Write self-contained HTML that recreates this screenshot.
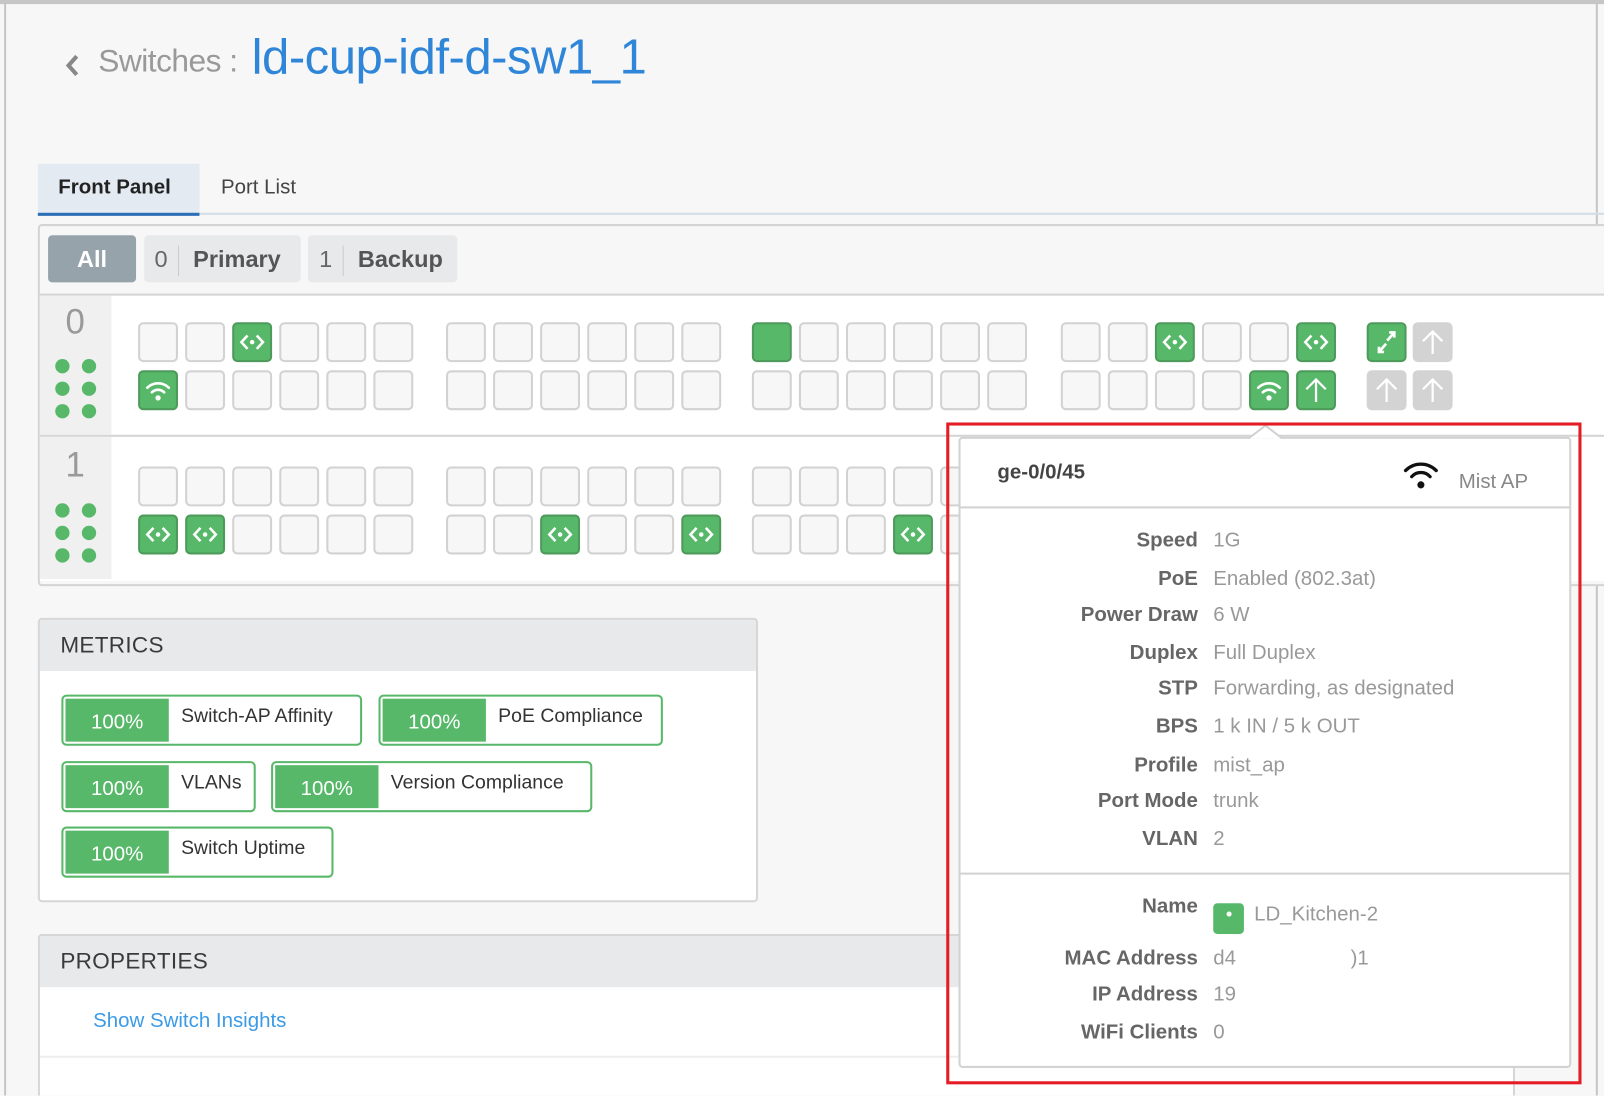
<!DOCTYPE html>
<html><head><meta charset="utf-8">
<style>
html,body{margin:0;padding:0;width:1604px;height:1096px;overflow:hidden;background:#f7f7f7;font-family:"Liberation Sans",sans-serif;}
#c{position:absolute;left:0;top:0;width:1568px;height:1071px;transform:scale(1.02296);transform-origin:0 0;background:#f7f7f7;overflow:hidden}
.a{position:absolute}
.g{position:absolute;display:flex;gap:7px}
.p{width:35px;height:35px;border:2px solid #d2d2d2;border-radius:5px;background:#f7f7f7;box-sizing:content-box}
.p.on{background:#57b86a;border-color:#4d9a5b}
.p.gr{background:#d3d3d3;border-color:#d3d3d3}
.p svg{display:block}
.dots{position:absolute;left:54px;width:42px;display:grid;grid-template-columns:14px 14px;column-gap:12px;row-gap:8px}
.dots i{width:14px;height:14px;border-radius:50%;background:#57b86a;display:block}
.card{position:absolute;background:#fff;border:2px solid #d6d6d6;border-radius:4px}
.ch{background:#e8e9eb;height:50px;font-size:22px;color:#3a3a3a;line-height:50px;padding-left:20px;letter-spacing:0.3px}
.m{position:absolute;height:46px;border:2px solid #57b86a;border-radius:5px;display:flex;align-items:center;background:#fff}
.m b{display:block;background:#57b86a;color:#fff;font-weight:normal;font-size:20px;height:42px;line-height:46px;margin-left:2px;width:101px;text-align:center}
.m span{font-size:19px;color:#333;padding-left:12px;margin-top:-6px}
.row{position:absolute;left:0;width:232px;text-align:right;font-size:20px;font-weight:bold;color:#666}
.val{position:absolute;left:247px;font-size:20px;color:#999;white-space:nowrap}
</style></head><body>
<div id="c">
<div class="a" style="left:0;top:0;width:1568px;height:4px;background:#c6c6c6"></div>
<div class="a" style="left:4px;top:0;width:2px;height:1071px;background:#c6c6c6"></div>
<div class="a" style="left:1560px;top:0;width:2px;height:1071px;background:#c6c6c6"></div>

<svg class="a" style="left:60px;top:50px" width="22" height="28" viewBox="0 0 22 28"><path d="M15 5 L7 14 L15 23" stroke="#888" stroke-width="4" fill="none"/></svg>
<div class="a" style="left:96px;top:42px;font-size:31px;color:#999;letter-spacing:-0.5px">Switches :</div>
<div class="a" style="left:246px;top:29px;font-size:48px;color:#2f86d8;letter-spacing:-0.5px">ld-cup-idf-d-sw1_1</div>

<div class="a" style="left:37px;top:160px;width:158px;height:48px;background:#e3eaf2;border-bottom:3px solid #2d6fb5"></div>
<div class="a" style="left:57px;top:172px;font-size:20px;color:#222;font-weight:bold">Front Panel</div>
<div class="a" style="left:216px;top:172px;font-size:20px;color:#444;">Port List</div>
<div class="a" style="left:195px;top:208px;width:1373px;height:2px;background:#d3dde6"></div>

<div class="a" style="left:37px;top:219px;width:1540px;height:350px;border:2px solid #d4d4d4;border-radius:4px;background:#f7f7f7"></div>
<div class="a" style="left:47px;top:230px;width:86px;height:46px;background:#97a3ab;border-radius:4px;color:#fff;font-size:23px;font-weight:bold;line-height:46px;text-align:center">All</div>
<div class="a" style="left:141px;top:230px;width:153px;height:46px;background:#e8e9eb;border-radius:4px;font-size:23px;color:#666;line-height:46px"><span style="padding-left:10px">0</span><span style="display:inline-block;width:1px;height:30px;background:#ccc;vertical-align:middle;margin:0 14px 0 10px"></span><b style="color:#555">Primary</b></div>
<div class="a" style="left:301px;top:230px;width:146px;height:46px;background:#e8e9eb;border-radius:4px;font-size:23px;color:#666;line-height:46px"><span style="padding-left:11px">1</span><span style="display:inline-block;width:1px;height:30px;background:#ccc;vertical-align:middle;margin:0 14px 0 10px"></span><b style="color:#555">Backup</b></div>

<div class="a" style="left:39px;top:287px;width:1538px;height:138px;background:#fff;border-top:2px solid #d4d4d4"></div>
<div class="a" style="left:39px;top:425px;width:1538px;height:141px;background:#fff;border-top:2px solid #d4d4d4"></div>
<div class="a" style="left:39px;top:289px;width:70px;height:136px;background:#f0f0f0"></div>
<div class="a" style="left:39px;top:427px;width:70px;height:139px;background:#f0f0f0"></div>
<div class="a" style="left:64px;top:296px;font-size:34px;color:#999">0</div>
<div class="a" style="left:64px;top:436px;font-size:34px;color:#999">1</div>
<div class="dots" style="top:351px"><i></i><i></i><i></i><i></i><i></i><i></i></div>
<div class="dots" style="top:492px"><i></i><i></i><i></i><i></i><i></i><i></i></div>

<div class="g" style="left:135px;top:315px"><div class="p"></div><div class="p"></div><div class="p on"><svg width="35" height="35" viewBox="0 0 35 35"><path d="M13 11 L7 17.5 L13 24 M22 11 L28 17.5 L22 24" stroke="#fff" stroke-width="2.5" fill="none"/><circle cx="17.5" cy="17.5" r="2.2" fill="#fff"/></svg></div><div class="p"></div><div class="p"></div><div class="p"></div></div>
<div class="g" style="left:135px;top:362px"><div class="p on"><svg width="35" height="35" viewBox="0 0 35 35"><path d="M7 15 A15 15 0 0 1 28 15 M11.5 19.5 A8.5 8.5 0 0 1 23.5 19.5" stroke="#fff" stroke-width="2.6" fill="none" stroke-linecap="round"/><circle cx="17.5" cy="25" r="2.6" fill="#fff"/></svg></div><div class="p"></div><div class="p"></div><div class="p"></div><div class="p"></div><div class="p"></div></div>
<div class="g" style="left:436px;top:315px"><div class="p"></div><div class="p"></div><div class="p"></div><div class="p"></div><div class="p"></div><div class="p"></div></div>
<div class="g" style="left:436px;top:362px"><div class="p"></div><div class="p"></div><div class="p"></div><div class="p"></div><div class="p"></div><div class="p"></div></div>
<div class="g" style="left:735px;top:315px"><div class="p on"></div><div class="p"></div><div class="p"></div><div class="p"></div><div class="p"></div><div class="p"></div></div>
<div class="g" style="left:735px;top:362px"><div class="p"></div><div class="p"></div><div class="p"></div><div class="p"></div><div class="p"></div><div class="p"></div></div>
<div class="g" style="left:1037px;top:315px"><div class="p"></div><div class="p"></div><div class="p on"><svg width="35" height="35" viewBox="0 0 35 35"><path d="M13 11 L7 17.5 L13 24 M22 11 L28 17.5 L22 24" stroke="#fff" stroke-width="2.5" fill="none"/><circle cx="17.5" cy="17.5" r="2.2" fill="#fff"/></svg></div><div class="p"></div><div class="p"></div><div class="p on"><svg width="35" height="35" viewBox="0 0 35 35"><path d="M13 11 L7 17.5 L13 24 M22 11 L28 17.5 L22 24" stroke="#fff" stroke-width="2.5" fill="none"/><circle cx="17.5" cy="17.5" r="2.2" fill="#fff"/></svg></div></div>
<div class="g" style="left:1037px;top:362px"><div class="p"></div><div class="p"></div><div class="p"></div><div class="p"></div><div class="p on"><svg width="35" height="35" viewBox="0 0 35 35"><path d="M7 15 A15 15 0 0 1 28 15 M11.5 19.5 A8.5 8.5 0 0 1 23.5 19.5" stroke="#fff" stroke-width="2.6" fill="none" stroke-linecap="round"/><circle cx="17.5" cy="25" r="2.6" fill="#fff"/></svg></div><div class="p on"><svg width="35" height="35" viewBox="0 0 35 35"><path d="M17.5 29 V7 M8 16.5 L17.5 7 L27 16.5" stroke="#fff" stroke-width="2.2" fill="none"/></svg></div></div>
<div class="g" style="left:1336px;top:315px;gap:6px"><div class="p on"><svg width="35" height="35" viewBox="0 0 35 35"><path d="M18 16 L25 8 M20 8 H25 V13 M17 19 L10 27 M10 22 V27 H15" stroke="#fff" stroke-width="2.6" fill="none"/></svg></div><div class="p gr"><svg width="35" height="35" viewBox="0 0 35 35"><path d="M17.5 29 V7 M8 16.5 L17.5 7 L27 16.5" stroke="#fff" stroke-width="2.2" fill="none"/></svg></div></div>
<div class="g" style="left:1336px;top:362px;gap:6px"><div class="p gr"><svg width="35" height="35" viewBox="0 0 35 35"><path d="M17.5 29 V7 M8 16.5 L17.5 7 L27 16.5" stroke="#fff" stroke-width="2.2" fill="none"/></svg></div><div class="p gr"><svg width="35" height="35" viewBox="0 0 35 35"><path d="M17.5 29 V7 M8 16.5 L17.5 7 L27 16.5" stroke="#fff" stroke-width="2.2" fill="none"/></svg></div></div>

<div class="g" style="left:135px;top:456px"><div class="p"></div><div class="p"></div><div class="p"></div><div class="p"></div><div class="p"></div><div class="p"></div></div>
<div class="g" style="left:135px;top:503px"><div class="p on"><svg width="35" height="35" viewBox="0 0 35 35"><path d="M13 11 L7 17.5 L13 24 M22 11 L28 17.5 L22 24" stroke="#fff" stroke-width="2.5" fill="none"/><circle cx="17.5" cy="17.5" r="2.2" fill="#fff"/></svg></div><div class="p on"><svg width="35" height="35" viewBox="0 0 35 35"><path d="M13 11 L7 17.5 L13 24 M22 11 L28 17.5 L22 24" stroke="#fff" stroke-width="2.5" fill="none"/><circle cx="17.5" cy="17.5" r="2.2" fill="#fff"/></svg></div><div class="p"></div><div class="p"></div><div class="p"></div><div class="p"></div></div>
<div class="g" style="left:436px;top:456px"><div class="p"></div><div class="p"></div><div class="p"></div><div class="p"></div><div class="p"></div><div class="p"></div></div>
<div class="g" style="left:436px;top:503px"><div class="p"></div><div class="p"></div><div class="p on"><svg width="35" height="35" viewBox="0 0 35 35"><path d="M13 11 L7 17.5 L13 24 M22 11 L28 17.5 L22 24" stroke="#fff" stroke-width="2.5" fill="none"/><circle cx="17.5" cy="17.5" r="2.2" fill="#fff"/></svg></div><div class="p"></div><div class="p"></div><div class="p on"><svg width="35" height="35" viewBox="0 0 35 35"><path d="M13 11 L7 17.5 L13 24 M22 11 L28 17.5 L22 24" stroke="#fff" stroke-width="2.5" fill="none"/><circle cx="17.5" cy="17.5" r="2.2" fill="#fff"/></svg></div></div>
<div class="g" style="left:735px;top:456px"><div class="p"></div><div class="p"></div><div class="p"></div><div class="p"></div><div class="p"></div><div class="p"></div></div>
<div class="g" style="left:735px;top:503px"><div class="p"></div><div class="p"></div><div class="p"></div><div class="p on"><svg width="35" height="35" viewBox="0 0 35 35"><path d="M13 11 L7 17.5 L13 24 M22 11 L28 17.5 L22 24" stroke="#fff" stroke-width="2.5" fill="none"/><circle cx="17.5" cy="17.5" r="2.2" fill="#fff"/></svg></div><div class="p"></div><div class="p"></div></div>

<div class="card" style="left:37px;top:604px;width:700px;height:274px;overflow:hidden">
<div class="ch">METRICS</div>
</div>
<div class="m" style="left:60px;top:679px;width:290px"><b>100%</b><span>Switch-AP Affinity</span></div>
<div class="m" style="left:370px;top:679px;width:274px"><b>100%</b><span>PoE Compliance</span></div>
<div class="m" style="left:60px;top:744px;width:186px"><b>100%</b><span>VLANs</span></div>
<div class="m" style="left:265px;top:744px;width:310px"><b>100%</b><span>Version Compliance</span></div>
<div class="m" style="left:60px;top:808px;width:262px"><b>100%</b><span>Switch Uptime</span></div>

<div class="card" style="left:37px;top:913px;width:1440px;height:156px;overflow:hidden;border-bottom:none;border-radius:4px 4px 0 0">
<div class="ch">PROPERTIES</div>
<div style="position:absolute;left:52px;top:72px;font-size:20px;color:#3b9be6">Show Switch Insights</div>
<div style="position:absolute;left:0;top:117px;width:100%;height:2px;background:#eee"></div>
</div>

<div class="a" style="left:937px;top:427px;width:595px;height:613px;background:#fff;border:2px solid #d2d2d2;border-radius:4px">
 <div class="a" style="left:36px;top:22px;font-size:20px;font-weight:bold;color:#444">ge-0/0/45</div>
 <svg class="a" style="left:432px;top:20px" width="36" height="32" viewBox="0 0 36 32"><path d="M3 11 A21 21 0 0 1 33 11 M9 17 A12 12 0 0 1 27 17" stroke="#111" stroke-width="3.2" fill="none" stroke-linecap="round"/><circle cx="18" cy="25" r="3.5" fill="#111"/></svg>
 <div class="a" style="left:487px;top:31px;font-size:20px;color:#888">Mist AP</div>
 <div class="a" style="left:0;top:66px;width:595px;height:2px;background:#d2d2d2"></div>
 <div class="row" style="top:88px">Speed</div><div class="val" style="top:88px">1G</div>
 <div class="row" style="top:126px">PoE</div><div class="val" style="top:126px">Enabled (802.3at)</div>
 <div class="row" style="top:161px">Power Draw</div><div class="val" style="top:161px">6 W</div>
 <div class="row" style="top:198px">Duplex</div><div class="val" style="top:198px">Full Duplex</div>
 <div class="row" style="top:233px">STP</div><div class="val" style="top:233px">Forwarding, as designated</div>
 <div class="row" style="top:270px">BPS</div><div class="val" style="top:270px">1 k IN / 5 k OUT</div>
 <div class="row" style="top:308px">Profile</div><div class="val" style="top:308px">mist_ap</div>
 <div class="row" style="top:343px">Port Mode</div><div class="val" style="top:343px">trunk</div>
 <div class="row" style="top:380px">VLAN</div><div class="val" style="top:380px">2</div>
 <div class="a" style="left:0;top:424px;width:595px;height:2px;background:#d2d2d2"></div>
 <div class="row" style="top:446px">Name</div>
 <div class="a" style="left:247px;top:454px;width:30px;height:30px;background:#57b86a;border-radius:4px"><div style="position:absolute;left:13px;top:8px;width:5px;height:5px;border-radius:50%;background:#fff"></div></div>
 <div class="val" style="left:287px;top:454px">LD_Kitchen-2</div>
 <div class="row" style="top:497px">MAC Address</div><div class="val" style="top:497px">d4<span style="display:inline-block;width:112px"></span>)1</div>
 <div class="row" style="top:532px">IP Address</div><div class="val" style="top:532px">19</div>
 <div class="row" style="top:569px">WiFi Clients</div><div class="val" style="top:569px">0</div>
</div>
<svg class="a" style="left:1220px;top:415px" width="34" height="14" viewBox="0 0 34 14"><path d="M0 14 L17 1 L34 14 Z" fill="#fff"/><path d="M0 14 L17 1 L34 14" stroke="#d2d2d2" stroke-width="2" fill="none"/></svg>
<div class="a" style="left:925px;top:413px;width:615px;height:641px;border:3px solid #e41c24"></div>
</div>
</body></html>
